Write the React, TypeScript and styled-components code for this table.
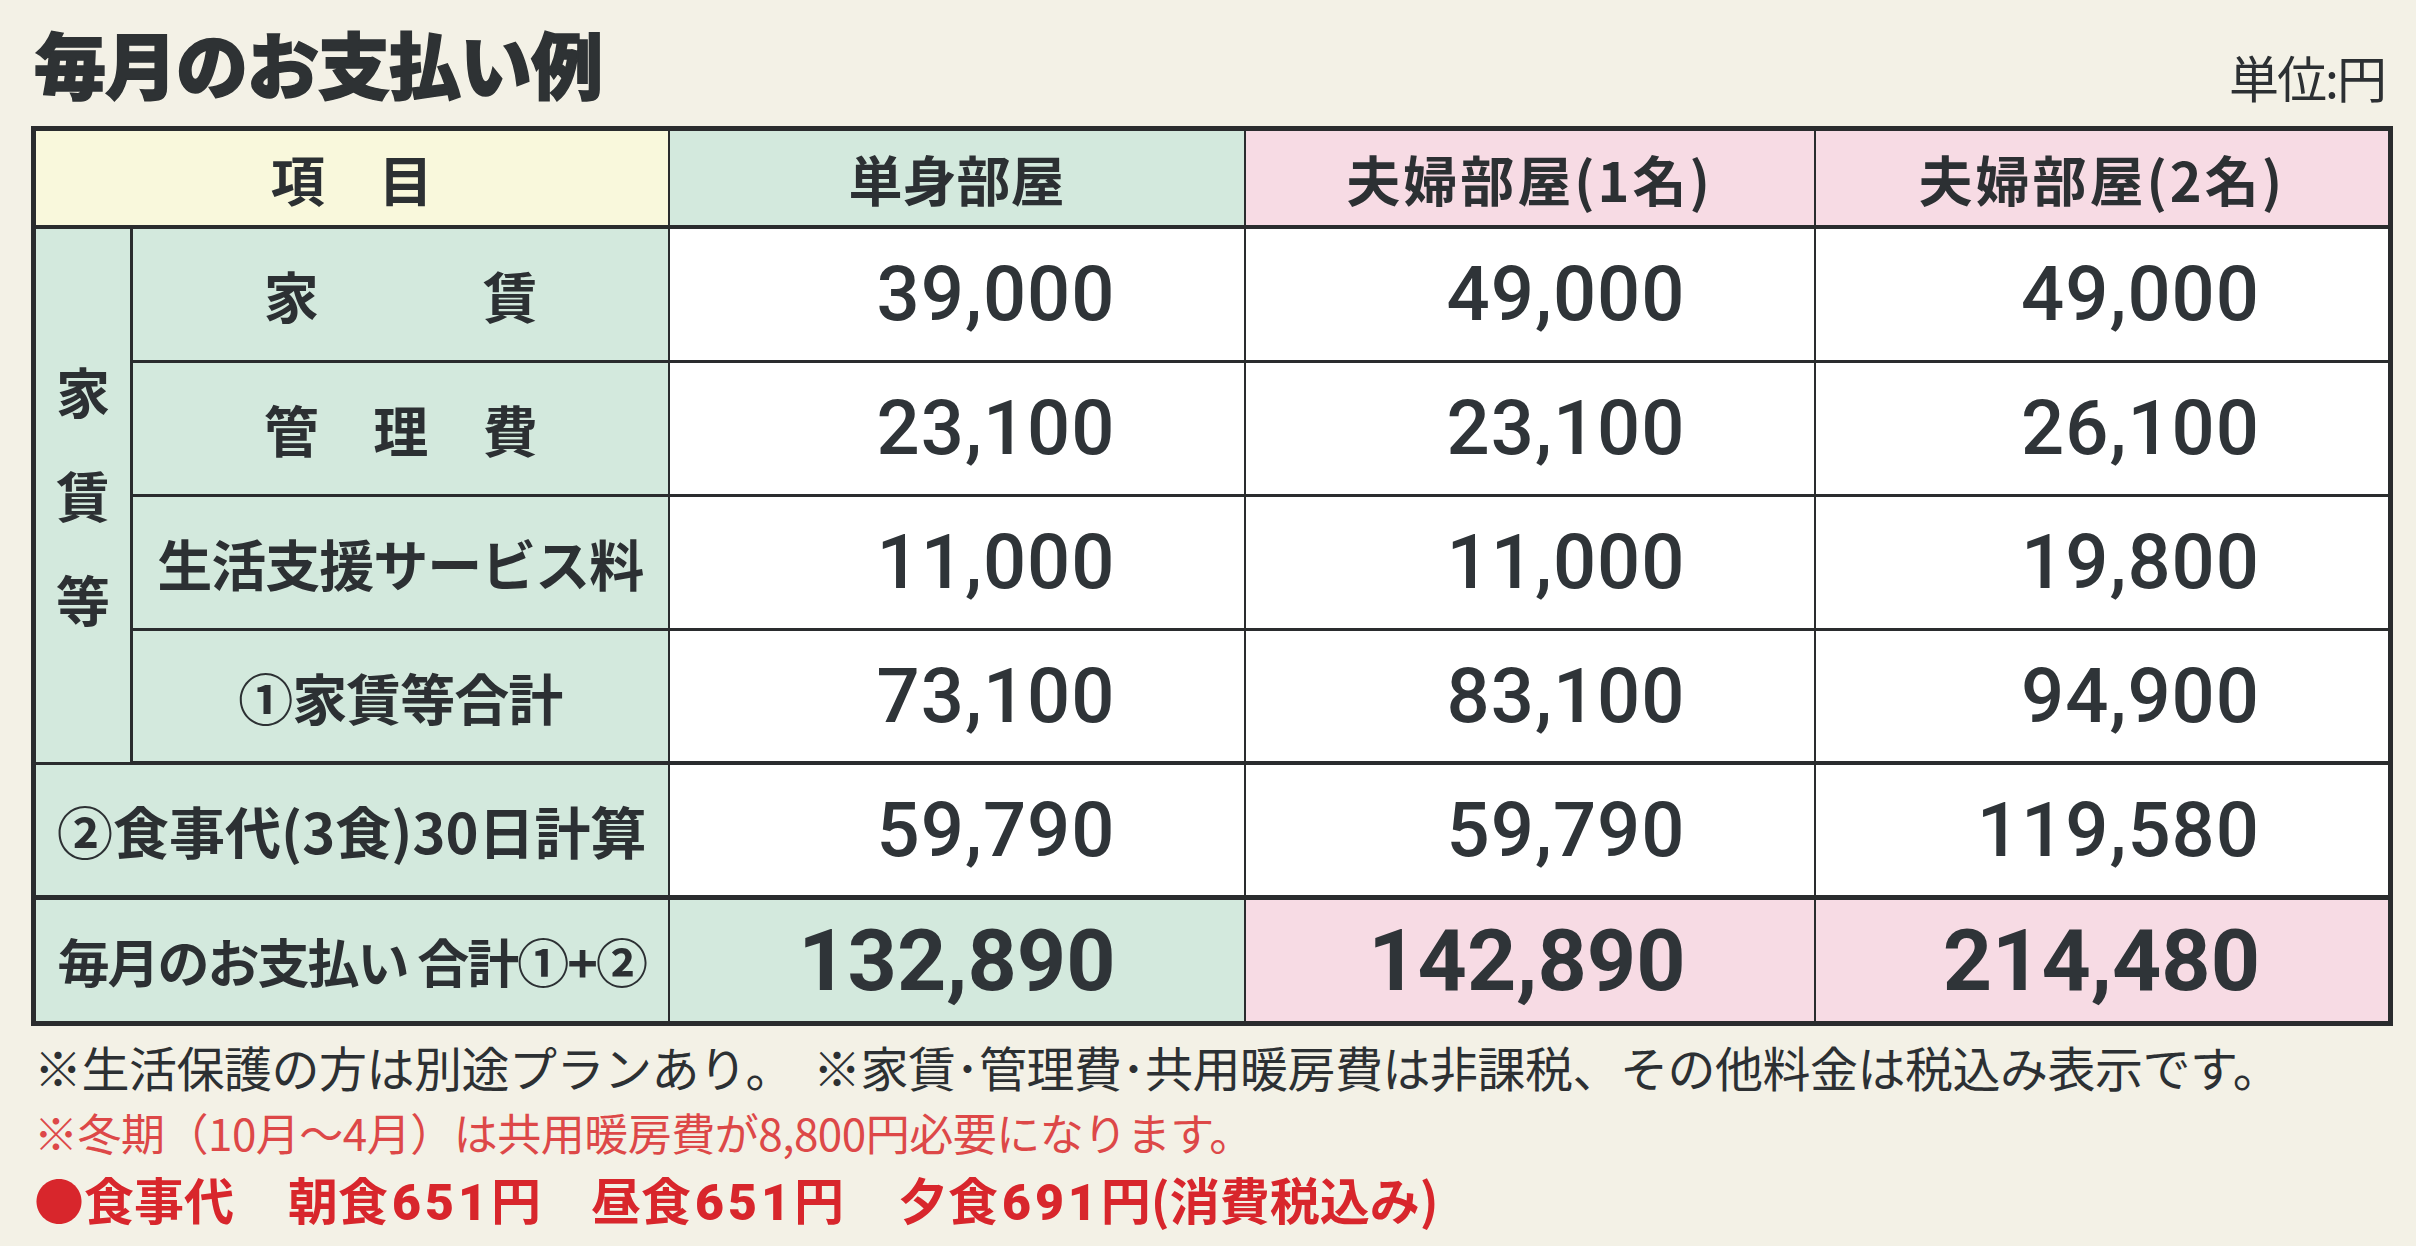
import React from "react";
import styled, { createGlobalStyle } from "styled-components";

const INK = "#2c3033";
const LINE = "#2a2c2e";
const YELLOW = "#f9f8dc";
const MINT = "#d3e9dd";
const PINK = "#f7dbe4";

const GlobalStyle = createGlobalStyle`
  html, body { margin: 0; padding: 0; }
  body {
    background: #f3f1e6;
    font-family: "Noto Sans CJK JP", "Noto Sans", sans-serif;
    color: ${INK};
  }
`;

const Page = styled.div`
  width: 2416px;
  height: 1246px;
  box-sizing: border-box;
  padding: 0 28px 0 31px;
  background: #f3f1e6;
  overflow: hidden;
`;

const TopBar = styled.div`
  height: 126px;
  display: flex;
  justify-content: space-between;
  align-items: flex-start;
`;

const Title = styled.h1`
  margin: 26px 0 0 3px;
  font-size: 72px;
  line-height: 1;
  font-weight: 900;
  letter-spacing: -1px;
  color: #2e3234;
  -webkit-text-stroke: 1.5px #2e3234;
`;

const Unit = styled.div`
  margin: 51px 3px 0 0;
  font-size: 50px;
  line-height: 1;
  font-weight: 400;
  letter-spacing: -2px;
  color: ${INK};
`;

const Table = styled.table`
  width: 2357px;
  table-layout: fixed;
  border-collapse: collapse;
  border: 5px solid ${LINE};
`;

const HeadCell = styled.th<{ $bg: string; $spacing?: number }>`
  height: 94px;
  padding: 0;
  background: ${(p) => p.$bg};
  border: 2px solid ${LINE};
  border-bottom: 4px solid ${LINE};
  font-size: 54px;
  font-weight: 700;
  text-align: center;
  white-space: nowrap;
  letter-spacing: ${(p) => p.$spacing ?? 0}px;
`;

const Row = styled.tr<{ $h: number; $bottom: number }>`
  height: ${(p) => p.$h}px;
  & > td {
    border-bottom: ${(p) => p.$bottom}px solid ${LINE};
  }
`;

const LabelCell = styled.td<{ $size?: number; $spacing?: number }>`
  padding: 0;
  background: ${MINT};
  border: 2px solid ${LINE};
  text-align: center;
  font-size: ${(p) => p.$size ?? 55}px;
  font-weight: 700;
  white-space: nowrap;
  letter-spacing: ${(p) => p.$spacing ?? -1}px;
`;

const GroupCell = styled.td`
  padding: 0;
  background: ${MINT};
  border: 2px solid ${LINE};
  border-right-width: 3px;
  border-bottom: 4px solid ${LINE};
`;

const GroupText = styled.div`
  display: flex;
  flex-direction: column;
  align-items: center;
  gap: 50px;
  font-size: 54px;
  font-weight: 700;
  line-height: 1;
`;

const Spaced = styled.span<{ $w: number }>`
  display: inline-flex;
  justify-content: space-between;
  width: ${(p) => p.$w}px;
`;

const NumCell = styled.td<{ $bg?: string; $total?: boolean }>`
  padding: 0 128px 0 0;
  background: ${(p) => p.$bg ?? "#ffffff"};
  border: 2px solid ${LINE};
  text-align: right;
  font-family: "Roboto", "Liberation Sans", sans-serif;
  font-size: ${(p) => (p.$total ? 86 : 76)}px;
  font-weight: ${(p) => (p.$total ? 700 : 500)};
  letter-spacing: ${(p) => (p.$total ? "0px" : "1px")};
  color: #2f3438;
`;

const Notes = styled.div`
  margin-top: 7px;
  padding-left: 3px;
`;

const Note = styled.p<{ $color?: string; $bold?: boolean; $size: number }>`
  margin: 0;
  height: 66px;
  line-height: 66px;
  font-size: ${(p) => p.$size}px;
  font-weight: ${(p) => (p.$bold ? 700 : 400)};
  color: ${(p) => p.$color ?? INK};
  white-space: nowrap;
  letter-spacing: ${(p) => (p.$bold ? "0px" : "-0.5px")};
`;

const Gap = styled.span<{ $w: number }>`
  display: inline-block;
  width: ${(p) => p.$w}px;
`;

const Digits = styled.span`
  font-family: "Roboto", "Liberation Sans", sans-serif;
  font-weight: 900;
  letter-spacing: 4px;
  margin-left: 4px;
`;

const group: { label: React.ReactNode; values: string[] }[] = [
  { label: <Spaced $w={273}><span>家</span><span>賃</span></Spaced>, values: ["39,000", "49,000", "49,000"] },
  { label: <Spaced $w={273}><span>管</span><span>理</span><span>費</span></Spaced>, values: ["23,100", "23,100", "26,100"] },
  { label: "生活支援サービス料", values: ["11,000", "11,000", "19,800"] },
  { label: "①家賃等合計", values: ["73,100", "83,100", "94,900"] },
];

const meal = ["59,790", "59,790", "119,580"];
const totals = ["132,890", "142,890", "214,480"];

export default function App() {
  return (
    <Page>
      <GlobalStyle />
      <TopBar>
        <Title>毎月のお支払い例</Title>
        <Unit>単位:円</Unit>
      </TopBar>
      <Table>
        <colgroup>
          <col style={{ width: 98 }} />
          <col style={{ width: 537 }} />
          <col style={{ width: 576 }} />
          <col style={{ width: 570 }} />
          <col style={{ width: 576 }} />
        </colgroup>
        <thead>
          <tr>
            <HeadCell $bg={YELLOW} colSpan={2}>
              項　目
            </HeadCell>
            <HeadCell $bg={MINT}>単身部屋</HeadCell>
            <HeadCell $bg={PINK} $spacing={3}>夫婦部屋(1名)</HeadCell>
            <HeadCell $bg={PINK} $spacing={3}>夫婦部屋(2名)</HeadCell>
          </tr>
        </thead>
        <tbody>
          {group.map((r, i) => (
            <Row key={i} $h={134} $bottom={i === 3 ? 4 : 3}>
              {i === 0 && (
                <GroupCell rowSpan={4}>
                  <GroupText>
                    <span>家</span>
                    <span>賃</span>
                    <span>等</span>
                  </GroupText>
                </GroupCell>
              )}
              <LabelCell>{r.label}</LabelCell>
              {r.values.map((v, j) => (
                <NumCell key={j}>{v}</NumCell>
              ))}
            </Row>
          ))}
          <Row $h={134} $bottom={5}>
            <LabelCell colSpan={2} $size={56} $spacing={0}>
              ②食事代(3食)30日計算
            </LabelCell>
            {meal.map((v, j) => (
              <NumCell key={j}>{v}</NumCell>
            ))}
          </Row>
          <Row $h={126} $bottom={5}>
            <LabelCell colSpan={2} $size={52} $spacing={-2}>
              毎月のお支払い 合計①+②
            </LabelCell>
            {totals.map((v, j) => (
              <NumCell key={j} $total $bg={j === 0 ? MINT : PINK}>
                {v}
              </NumCell>
            ))}
          </Row>
        </tbody>
      </Table>
      <Notes>
        <Note $size={48}>
          ※生活保護の方は別途プランあり。<Gap $w={20} />※家賃･管理費･共用暖房費は非課税、その他料金は税込み表示です。
        </Note>
        <Note $size={44} $color="#dd4848">
          ※冬期（10月～4月）は共用暖房費が8,800円必要になります。
        </Note>
        <Note $size={50} $bold $color="#d8262c">
          ●食事代<Gap $w={54} />朝食<Digits>651</Digits>円<Gap $w={50} />昼食<Digits>651</Digits>円<Gap $w={54} />夕食<Digits>691</Digits>円(消費税込み)
        </Note>
      </Notes>
    </Page>
  );
}
